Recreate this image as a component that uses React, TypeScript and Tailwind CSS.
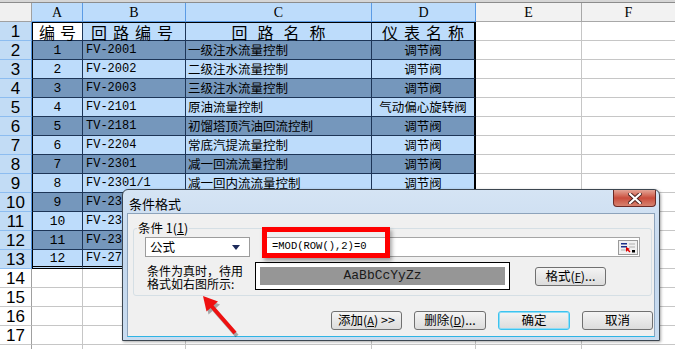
import React from 'react';

const DARK = 'bg-[#7597bc]';
const LIGHT = 'bg-[#bddcfb]';

const rows: [string, string, string, string][] = [
  ['1', 'FV-2001', '一级注水流量控制', '调节阀'],
  ['2', 'FV-2002', '二级注水流量控制', '调节阀'],
  ['3', 'FV-2003', '三级注水流量控制', '调节阀'],
  ['4', 'FV-2101', '原油流量控制', '气动偏心旋转阀'],
  ['5', 'TV-2181', '初馏塔顶汽油回流控制', '调节阀'],
  ['6', 'FV-2204', '常底汽提流量控制', '调节阀'],
  ['7', 'FV-2301', '减一回流流量控制', '调节阀'],
  ['8', 'FV-2301/1', '减一回内流流量控制', '调节阀'],
  ['9', 'FV-2302', '减二回流流量控制', '调节阀'],
  ['10', 'FV-2303', '减三回流流量控制', '调节阀'],
  ['11', 'FV-2304', '减四回流流量控制', '调节阀'],
  ['12', 'FV-2701', '常压塔液位控制', '调节阀'],
];

const cjk = "font-['Noto_Sans_CJK_SC',sans-serif]";
const mono = "font-['Liberation_Mono','Noto_Sans_CJK_SC',monospace]";

function ColHeader() {
  return (
    <div className="flex h-[19px] font-['Liberation_Serif',serif] text-[14px] text-black">
      <div className="w-[32px] bg-[#f0f0f0] border-r border-b border-[#a0a0a0]" />
      <div className="w-[51px] bg-[#bddcfb] border-r border-b border-[#5b9be5] flex items-center justify-center">A</div>
      <div className="w-[103px] bg-[#bddcfb] border-r border-b border-[#5b9be5] flex items-center justify-center">B</div>
      <div className="w-[186px] bg-[#bddcfb] border-r border-b border-[#5b9be5] flex items-center justify-center">C</div>
      <div className="w-[104px] bg-[#bddcfb] border-r border-b border-[#5b9be5] flex items-center justify-center">D</div>
      <div className="w-[106px] bg-[#f2f2f2] border-r border-b border-[#a8a8a8] flex items-center justify-center">E</div>
      <div className="flex-1 bg-[#f2f2f2] border-b border-[#a8a8a8] flex items-center justify-center">F</div>
    </div>
  );
}

function RowHead({ n, sel }: { n?: number; sel: boolean }) {
  return (
    <div
      className={`w-[32px] flex items-center justify-center font-['Liberation_Sans',sans-serif] text-[17px] leading-none text-black border-r ${
        sel ? 'bg-[#c2dcf5] border-b border-b-[#8dbdf0] border-r-[#4f93df]' : 'bg-white border-b border-b-[#c8c8c8] border-r-[#a0a0a0]'
      }`}
    >
      {n}
    </div>
  );
}

function EmptyTail() {
  return (
    <>
      <div className="w-[106px] bg-white border-r border-b border-[#c6c6c6]" />
      <div className="flex-1 bg-white border-b border-[#c6c6c6]" />
    </>
  );
}

function TitleRow() {
  const head = `${cjk} text-[16px] leading-none text-black flex items-center justify-center border-b border-r border-[#1d3557] border-t border-t-black`;
  return (
    <div className="flex h-[19px]">
      <RowHead n={1} sel />
      <div className={`${head} w-[51px] bg-white gap-[5px] border-l border-l-black`}>
        <span>编</span>
        <span>号</span>
      </div>
      <div className={`${head} w-[103px] ${LIGHT} gap-[6px] pr-[4px]`}>
        <span>回</span><span>路</span><span>编</span><span>号</span>
      </div>
      <div className={`${head} w-[186px] ${LIGHT} gap-[10px]`}>
        <span>回</span><span>路</span><span>名</span><span>称</span>
      </div>
      <div className={`${head} w-[104px] ${LIGHT} gap-[6px] border-r-2 border-r-black`}>
        <span>仪</span><span>表</span><span>名</span><span>称</span>
      </div>
      <EmptyTail />
    </div>
  );
}

function DataRow({ r, i }: { r: [string, string, string, string]; i: number }) {
  const rowNum = i + 2;
  const bg = rowNum % 2 === 0 ? DARK : LIGHT;
  const last = i === rows.length - 1;
  const cell = `border-r border-[#1d3557] ${last ? 'border-b-[3px] border-double border-b-black' : 'border-b'} ${bg} flex items-center text-black leading-none`;
  return (
    <div className="flex h-[19px]">
      <RowHead n={rowNum} sel />
      <div className={`${cell} w-[51px] justify-center border-l border-l-black ${mono} text-[13px]`}>{r[0]}</div>
      <div className={`${cell} w-[103px] pl-[3px] ${mono} text-[12px]`}>{r[1]}</div>
      <div className={`${cell} w-[186px] pl-[2px] ${cjk} text-[12.5px] whitespace-nowrap overflow-hidden`}>{r[2]}</div>
      <div className={`${cell} w-[104px] justify-center ${cjk} text-[12.5px] whitespace-nowrap border-r-2 border-r-black`}>{r[3]}</div>
      <EmptyTail />
    </div>
  );
}

function BlankRow({ n }: { n?: number }) {
  return (
    <div className="flex h-[19px]">
      <RowHead n={n} sel={false} />
      <div className="w-[51px] border-r border-b border-[#c6c6c6]" />
      <div className="w-[103px] border-r border-b border-[#c6c6c6]" />
      <div className="w-[186px] border-r border-b border-[#c6c6c6]" />
      <div className="w-[104px] border-r border-b border-[#c6c6c6]" />
      <EmptyTail />
    </div>
  );
}

function Btn({ children, w, focus }: { children: React.ReactNode; w: string; focus?: boolean }) {
  return (
    <div
      className={`${w} h-[19px] rounded-[3px] border ${
        focus ? 'border-[#3cc3ef] shadow-[inset_0_0_0_1px_#8fdcf5]' : 'border-[#707070]'
      } bg-gradient-to-b from-[#f4f4f4] to-[#dcdcdc] flex items-center justify-center ${cjk} text-[12.5px] text-black leading-none`}
    >
      {children}
    </div>
  );
}

function RefIcon() {
  return (
    <svg width="20" height="15" viewBox="0 0 20 15">
      <rect x="0.5" y="0.5" width="19" height="14" fill="#f0f0f0" stroke="#9a9a9a" />
      <rect x="3" y="3" width="6" height="1.5" fill="#1b2f8a" />
      <rect x="3" y="6" width="6" height="1.5" fill="#1b2f8a" />
      <line x1="11" y1="4" x2="17" y2="4" stroke="#b0b0b0" />
      <line x1="11" y1="7" x2="17" y2="7" stroke="#b0b0b0" />
      <line x1="3" y1="10" x2="9" y2="10" stroke="#b0b0b0" />
      <polygon points="8,7 8,12 9.5,10.5 11.5,12.5 12.5,11.5 10.5,9.5 12,9" fill="#e00000" />
      <rect x="14" y="10" width="3" height="2.5" fill="#000" />
    </svg>
  );
}

function Dialog() {
  return (
    <div className="absolute left-[122px] top-[189px] w-[538px] h-[152px] rounded-t-[6px] border border-[#3c4650] bg-gradient-to-b from-[#d5e4f4] via-[#c4d8ee] to-[#c9dcf0] px-[4px] pb-[3px] flex flex-col shadow-[1px_1px_3px_rgba(0,0,0,0.35)]">
      <div className="h-[23px] flex items-start">
        <span className={`${cjk} text-[13px] text-black mt-[4px] ml-[2px]`}>条件格式</span>
        <div className="ml-auto mr-[-1px] w-[43px] h-[17px] rounded-b-[4px] border border-t-0 border-[#6b2a25] bg-gradient-to-b from-[#e3a597] via-[#c94c3c] to-[#d6826f] flex items-center justify-center">
          <svg width="14" height="11" viewBox="0 0 14 11">
            <path d="M2 1 L12 10 M12 1 L2 10" stroke="#4a2320" strokeWidth="4" strokeLinecap="square" />
            <path d="M2 1 L12 10 M12 1 L2 10" stroke="#ffffff" strokeWidth="2.2" strokeLinecap="square" />
          </svg>
        </div>
      </div>
      <div className="flex-1 bg-[#f0f0f0] border border-[#8da3bb] border-b-[#2fb4e4]">
        <div className="relative ml-[5px] mt-[14px] w-[519px] h-[68px] border border-[#d5dfe5] rounded-[3px] pt-[8px] pl-[11px] pr-[11px]">
          <span className={`absolute left-[3px] top-[-8px] bg-[#f0f0f0] px-[1px] ${cjk} text-[12.5px] leading-[14px] text-black`}>
            条件 1(<span className="underline">1</span>)
          </span>
          <div className="flex items-center h-[20px]">
            <div className={`w-[105px] h-[20px] bg-white border border-[#9c9c9c] flex items-center pl-[4px] ${cjk} text-[12.5px] text-black`}>
              公式
              <svg className="ml-auto mr-[9px]" width="8" height="5" viewBox="0 0 8 5">
                <polygon points="0,0 8,0 4,5" fill="#1c2a5a" />
              </svg>
            </div>
            <div className="ml-[16px] flex-1 h-[20px] bg-white border border-[#a5a5a5] flex items-center pl-[5px] pr-[1px]">
              <span className={`${mono} text-[10.5px] text-black`}>=MOD(ROW(),2)=0</span>
              <div className="ml-auto">
                <RefIcon />
              </div>
            </div>
          </div>
          <div className="flex mt-[5px]">
            <div className={`w-[110px] pl-[2px] pt-[2px] ${cjk} text-[12px] leading-[13px] text-black whitespace-nowrap`}>
              <div>条件为真时，待用</div>
              <div>格式如右图所示:</div>
            </div>
            <div className="w-[255px] h-[28px] bg-white border border-black p-[4px]">
              <div className="w-full h-full bg-[#969696] flex items-center justify-center font-['Liberation_Mono',monospace] font-normal text-[13px] text-[#1a1a1a]">
                AaBbCcYyZz
              </div>
            </div>
            <div className="ml-[25px] mt-[5px]">
              <Btn w="w-[71px]">
                格式(<span className="underline text-[11px]">F</span>)...
              </Btn>
            </div>
          </div>
        </div>
        <div className="flex justify-end gap-[12px] mt-[15px] mr-[1px]">
          <Btn w="w-[71px]">
            添加(<span className="underline text-[11px]">A</span>) &gt;&gt;
          </Btn>
          <Btn w="w-[72px]">
            删除(<span className="underline text-[11px]">D</span>)...
          </Btn>
          <Btn w="w-[72px]" focus>
            确定
          </Btn>
          <Btn w="w-[71px]">取消</Btn>
        </div>
      </div>
    </div>
  );
}

export default function App() {
  return (
    <div className="relative w-[675px] h-[349px] overflow-hidden bg-white">
      <div className="h-[3px] bg-[#d6d6d6] border-b border-[#8c8c8c]" />
      <ColHeader />
      <TitleRow />
      {rows.map((r, i) => (
        <DataRow key={i} r={r} i={i} />
      ))}
      {[14, 15, 16, 17].map((n) => (
        <BlankRow key={n} n={n} />
      ))}
      <BlankRow />

      <Dialog />

      {/* annotation: red box round the formula */}
      <div className="absolute left-[262px] top-[227px] w-[128px] h-[31px] border-[5px] border-[#ff0000] shadow-[2px_3px_4px_rgba(0,0,0,0.35)]" />

      {/* annotation: red arrow */}
      <svg className="absolute left-[195px] top-[288px]" width="50" height="52" viewBox="0 0 50 52">
        <g transform="translate(2,3)" opacity="0.3">
          <line x1="40" y1="45" x2="16" y2="17.5" stroke="#000" strokeWidth="4" />
          <polygon points="8,8 23,13.5 11.5,23.5" fill="#000" />
        </g>
        <line x1="40" y1="45" x2="16" y2="17.5" stroke="#ee1111" strokeWidth="4" />
        <polygon points="8,8 23,13.5 11.5,23.5" fill="#ee1111" />
      </svg>
    </div>
  );
}
